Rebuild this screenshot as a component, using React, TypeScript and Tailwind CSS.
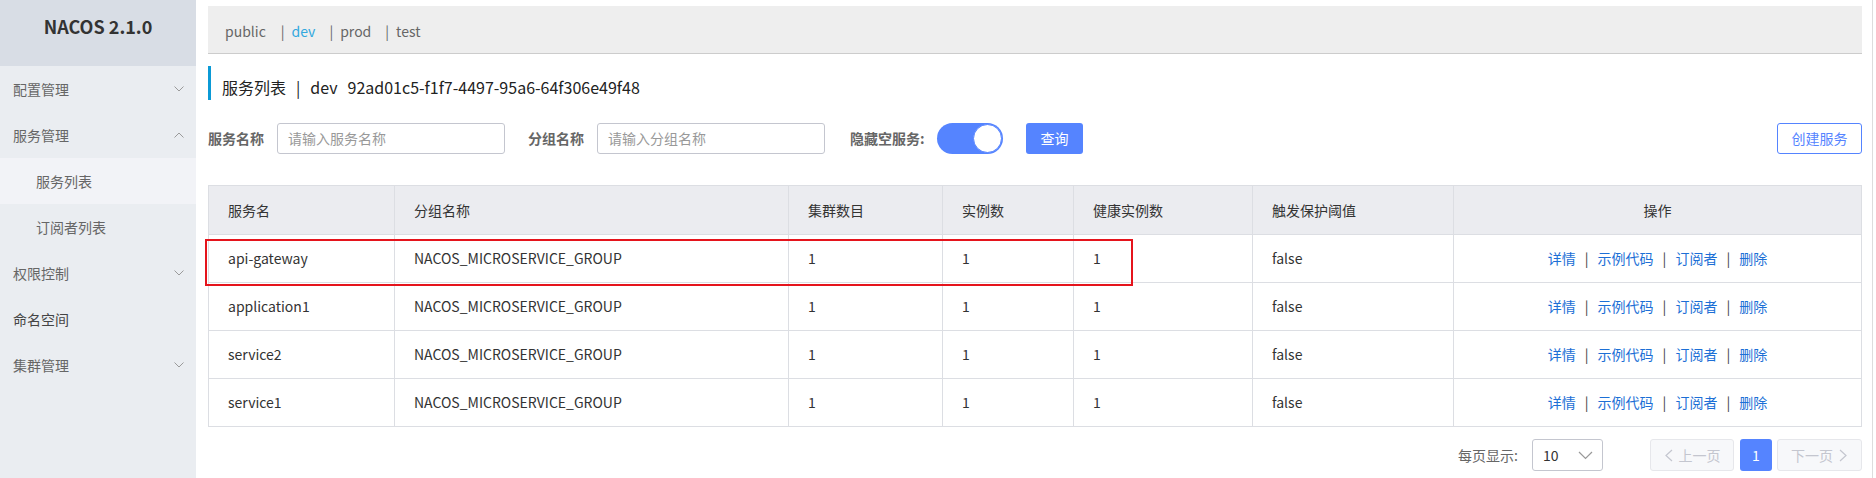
import React from "react";

function ChevronDown({ up = false }: { up?: boolean }) {
  return (
    <svg width="10" height="6" viewBox="0 0 10 6" className={up ? "rotate-180" : ""}>
      <path d="M0.5 0.5 L5 5 L9.5 0.5" fill="none" stroke="#9a9a9a" strokeWidth="1" />
    </svg>
  );
}

const menu: { label: string; kind: "down" | "up" | "sub" | "subActive" | "leaf" }[] = [
  { label: "配置管理", kind: "down" },
  { label: "服务管理", kind: "up" },
  { label: "服务列表", kind: "subActive" },
  { label: "订阅者列表", kind: "sub" },
  { label: "权限控制", kind: "down" },
  { label: "命名空间", kind: "leaf" },
  { label: "集群管理", kind: "down" },
];

const rows = ["api-gateway", "application1", "service2", "service1"];

const cols = "grid grid-cols-[186px_394px_154px_131px_179px_201px_408px]";

export default function App() {
  return (
    <div className="flex w-[1876px] h-[478px] overflow-hidden bg-white font-['Noto_Sans_CJK_SC','Noto_Sans',sans-serif] text-[14px]">
      {/* Sidebar */}
      <aside className="w-[196px] shrink-0 bg-[#eaedf1] h-full">
        <div className="h-[66px] bg-[#d8dde5] pt-[13px] text-center text-[18px] leading-[26px] font-bold text-[#333]">
          NACOS 2.1.0
        </div>
        {menu.map((m) => (
          <div
            key={m.label}
            className={
              "h-[46px] flex items-center justify-between pr-[12px] " +
              (m.kind === "sub" || m.kind === "subActive" ? "pl-[36px] " : "pl-[13px] ") +
              (m.kind === "subActive" ? "bg-[#f2f3f7] " : "") +
              (m.kind === "leaf" ? "text-[#444]" : "text-[#666]")
            }
          >
            <span>{m.label}</span>
            {m.kind === "down" && <ChevronDown />}
            {m.kind === "up" && <ChevronDown up />}
          </div>
        ))}
      </aside>

      {/* Main */}
      <main className="w-[1676px] shrink-0 pl-[12px] pr-[10px] pt-[6px]">
        {/* namespace bar */}
        <div className="h-[48px] bg-[#eeeeee] border-b border-[#cccccc] flex items-center pl-[17px] pt-[3px] text-[#666]">
          <span>public</span>
          <span className="ml-[15px]">|</span>
          <span className="ml-[7px] text-[#33a8de]">dev</span>
          <span className="ml-[14px]">|</span>
          <span className="ml-[7px]">prod</span>
          <span className="ml-[14px]">|</span>
          <span className="ml-[7px]">test</span>
        </div>

        {/* title */}
        <div className="mt-[12px] h-[34px] border-l-[3px] border-[#0b9ad6] pl-[11px] pt-[10px] text-[16px] leading-[22px] text-[#222]">
          <span>服务列表</span>
          <span className="mx-[10px]">|</span>
          <span>dev</span>
          <span className="ml-[10px]">92ad01c5-f1f7-4497-95a6-64f306e49f48</span>
        </div>

        {/* filter row */}
        <div className="mt-[23px] h-[31px] flex items-center">
          <span className="font-bold text-[#666] w-[69px]">服务名称</span>
          <div className="w-[228px] h-[31px] border border-[#c4c6cf] rounded-[3px] flex items-center px-[10px] text-[#999]">
            请输入服务名称
          </div>
          <span className="ml-[23px] font-bold text-[#666] w-[69px]">分组名称</span>
          <div className="w-[228px] h-[31px] border border-[#c4c6cf] rounded-[3px] flex items-center px-[10px] text-[#999]">
            请输入分组名称
          </div>
          <span className="ml-[25px] font-bold text-[#666] w-[87px]">隐藏空服务:</span>
          <div className="w-[66px] h-[31px] rounded-full bg-[#5584ff] flex items-center justify-end">
            <div className="w-[29px] h-[29px] mr-[1px] rounded-full bg-white border border-[#5584ff]" />
          </div>
          <button className="ml-[23px] w-[57px] h-[31px] rounded-[3px] bg-[#5584ff] text-white">查询</button>
          <div className="flex-1" />
          <button className="w-[85px] h-[31px] rounded-[3px] border border-[#5584ff] bg-white text-[#5584ff]">
            创建服务
          </button>
        </div>

        {/* table */}
        <div className="relative mt-[31px] border-t border-l border-[#dcdee3] text-[#333]">
          <div className={cols + " h-[49px] bg-[#ebecf0]"}>
            {["服务名", "分组名称", "集群数目", "实例数", "健康实例数", "触发保护阈值"].map((h) => (
              <div key={h} className="border-r border-b border-[#dcdee3] flex items-center pl-[19px]">
                {h}
              </div>
            ))}
            <div className="border-r border-b border-[#dcdee3] flex items-center justify-center">操作</div>
          </div>
          {rows.map((r) => (
            <div key={r} className={cols + " h-[48px]"}>
              {[r, "NACOS_MICROSERVICE_GROUP", "1", "1", "1", "false"].map((c, i) => (
                <div key={i} className="border-r border-b border-[#dcdee3] flex items-center pl-[19px]">
                  {c}
                </div>
              ))}
              <div className="border-r border-b border-[#dcdee3] flex items-center justify-center text-[#1c6fd6]">
                <span>详情</span>
                <span className="mx-[9px] text-[#444]">|</span>
                <span>示例代码</span>
                <span className="mx-[9px] text-[#444]">|</span>
                <span>订阅者</span>
                <span className="mx-[9px] text-[#444]">|</span>
                <span>删除</span>
              </div>
            </div>
          ))}
          {/* red annotation box */}
          <div className="absolute left-[-4px] top-[53px] w-[928px] h-[47px] border-2 border-[#e5141c] pointer-events-none" />
        </div>

        {/* pagination */}
        <div className="mt-[12px] flex items-center justify-end h-[32px]">
          <span className="text-[#666]">每页显示:</span>
          <div className="ml-[14px] w-[71px] h-[32px] border border-[#c4c6cf] rounded-[3px] flex items-center justify-between pl-[10px] pr-[9px] text-[#333]">
            <span>10</span>
            <svg width="15" height="9" viewBox="0 0 15 9">
              <path d="M1 1 L7.5 7.5 L14 1" fill="none" stroke="#999" strokeWidth="1.2" />
            </svg>
          </div>
          <div className="ml-[47px] w-[84px] h-[32px] border border-[#e6e7eb] bg-[#f7f8fa] rounded-[3px] flex items-center justify-center text-[#c4c6cf]">
            <svg width="9" height="13" viewBox="0 0 9 13" className="mr-[6px]">
              <path d="M8 1 L2 6.5 L8 12" fill="none" stroke="#c4c6cf" strokeWidth="1.2" />
            </svg>
            <span>上一页</span>
          </div>
          <div className="ml-[6px] w-[32px] h-[32px] rounded-[3px] bg-[#5584ff] text-white flex items-center justify-center">
            1
          </div>
          <div className="ml-[5px] w-[85px] h-[32px] border border-[#e6e7eb] bg-[#f7f8fa] rounded-[3px] flex items-center justify-center text-[#c4c6cf]">
            <span>下一页</span>
            <svg width="9" height="13" viewBox="0 0 9 13" className="ml-[6px]">
              <path d="M1 1 L7 6.5 L1 12" fill="none" stroke="#c4c6cf" strokeWidth="1.2" />
            </svg>
          </div>
        </div>
      </main>
      <div className="w-[4px] shrink-0 border-l border-[#dddddd]" />
    </div>
  );
}
